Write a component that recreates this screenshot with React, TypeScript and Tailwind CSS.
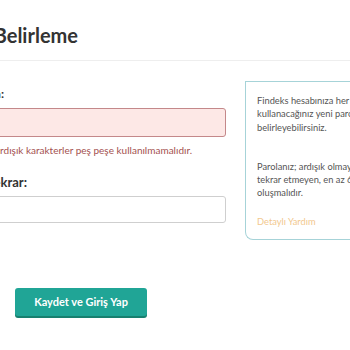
import React from 'react'

export default function App() {
  return (
    <div className="relative h-[350px] w-[350px] overflow-hidden bg-white font-['Lato','Open_Sans',sans-serif] text-[#333]">
      {/* Page title */}
      <div className="border-b border-[#eeeeee] pb-[14px] pt-[24px]">
        <div className="flex w-[78px] justify-end">
          <h1 className="shrink-0 whitespace-nowrap text-[20px] font-bold leading-[22px] text-[#333]">
            Parola Belirleme
          </h1>
        </div>
      </div>

      <div className="mt-[20px] flex">
        {/* Form column */}
        <div className="-ml-[120px] w-[346px] shrink-0 pt-[6px]">
          <div className="flex w-[124px] justify-end">
            <label className="shrink-0 whitespace-nowrap text-[12px] font-bold leading-[13px] text-[#333]">
              Yeni Parola:
            </label>
          </div>
          <div className="mt-[8px] h-[29px] rounded-[3px] border border-[#c4888a] bg-[#fde8e6]" />
          <div className="mt-[7px] flex w-[312px] justify-end">
            <p className="shrink-0 whitespace-nowrap text-[10px] leading-[13px] text-[#a4514f]">
              Parolanızda ardışık karakterler peş peşe kullanılmamalıdır.
            </p>
          </div>
          <div className="mt-[18px] flex w-[147px] justify-end">
            <label className="shrink-0 whitespace-nowrap text-[13px] font-bold leading-[14px] text-[#333]">
              Yeni Parola Tekrar:
            </label>
          </div>
          <div className="mt-[7px] h-[27px] rounded-[3px] border border-[#cfcfcf] bg-white" />
        </div>

        {/* Help box */}
        <aside className="ml-[19px] w-[200px] shrink-0 rounded-bl-[8px] border-b border-l border-t border-[#a6d3d8] pb-[11px] pl-[11px] pt-[12px] text-[9.3px] leading-[13.3px] text-[#555]">
          <p className="whitespace-nowrap">
            Findeks hesabınıza her girişte
            <br />
            kullanacağınız yeni parolanızı
            <br />
            belirleyebilirsiniz.
          </p>
          <p className="mt-[26px] whitespace-nowrap">
            Parolanız; ardışık olmayan ve
            <br />
            tekrar etmeyen, en az 6 karakterden
            <br />
            oluşmalıdır.
          </p>
          <a className="mt-[15px] block text-[#f2c88e]">Detaylı Yardım</a>
        </aside>
      </div>

      <button
        type="button"
        className="ml-[15px] mt-[48px] flex h-[28px] w-[132px] items-center justify-center rounded-[3px] bg-[#20a596] text-[11px] font-bold text-white shadow-[0_2px_0_#17806f]"
      >
        Kaydet ve Giriş Yap
      </button>
    </div>
  )
}
